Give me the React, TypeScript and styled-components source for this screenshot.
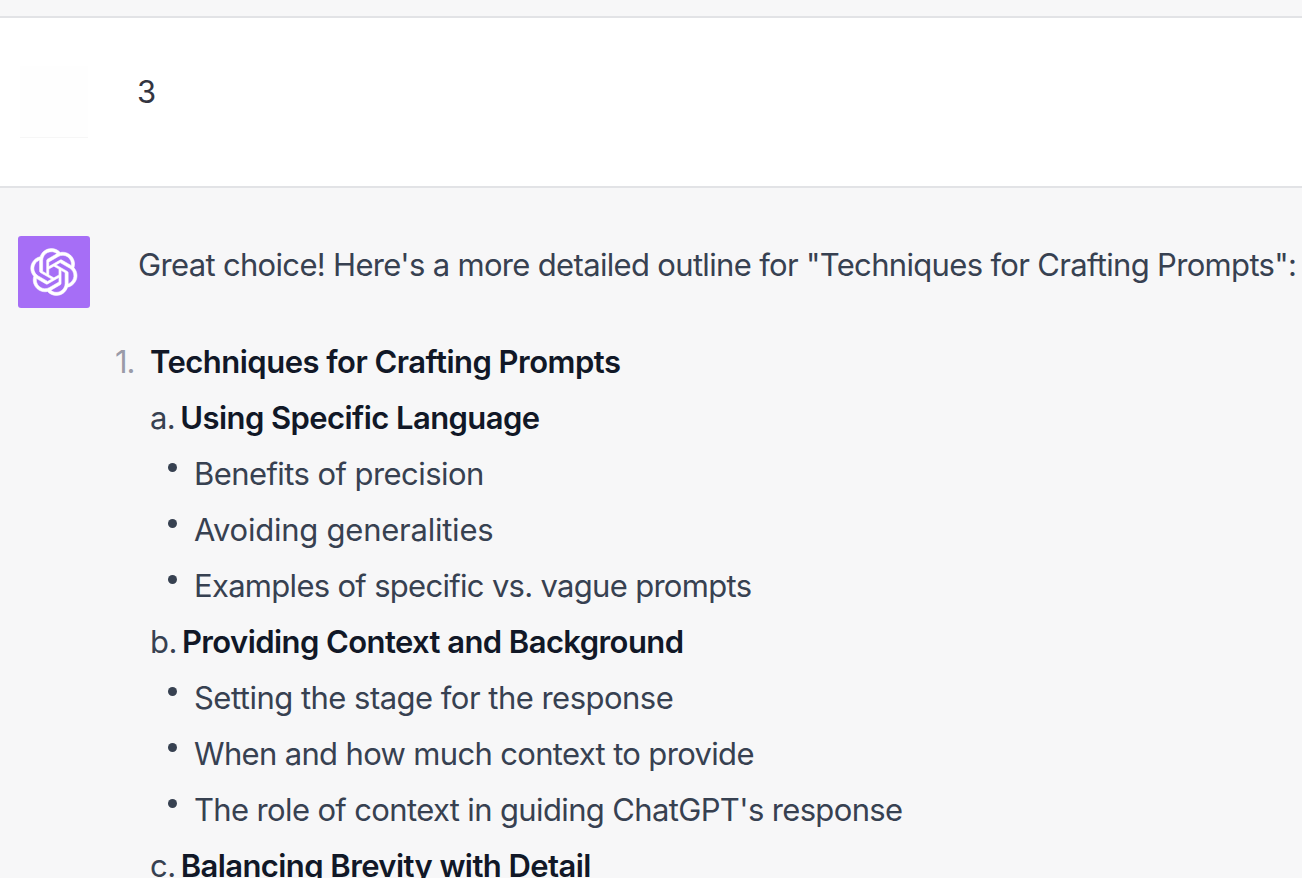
import React from "react";
import styled, { createGlobalStyle } from "styled-components";

const Global = createGlobalStyle`
  html, body { margin: 0; padding: 0; background: #f7f7f8; overflow: hidden; }
  body { height: 878px; font-family: Inter, "Liberation Sans", sans-serif; }
`;

const Page = styled.div`
  width: 1302px;
  height: 878px;
  overflow: hidden;
  display: flex;
  flex-direction: column;
`;

const TopStrip = styled.div`
  flex: none;
  height: 16px;
  background: #f7f7f8;
  border-bottom: 2px solid #e2e3e6;
`;

const UserRow = styled.div`
  flex: none;
  height: 170px;
  box-sizing: border-box;
  background: #fff;
  border-bottom: 2px solid #e2e3e6;
  display: flex;
  padding: 48px 0 0 20px;
`;

const BlankAvatar = styled.div`
  width: 68px;
  height: 72px;
  flex: none;
  background: #fefefe;
  border-bottom: 1px solid #f6f6f6;
  box-sizing: border-box;
`;

const UserText = styled.div`
  margin-left: 49px;
  font-size: 31px;
  line-height: 52px;
  color: #343541;
`;

const BotRow = styled.div`
  flex: 1;
  display: flex;
  padding: 48px 0 0 18px;
  background: #f7f7f8;
`;

const BotAvatar = styled.div`
  width: 72px;
  height: 72px;
  flex: none;
  background: #a66ef6;
  border-radius: 3px;
  display: flex;
  align-items: center;
  justify-content: center;
  color: #fff;
`;

const Body = styled.div`
  margin-left: 48px;
  width: 1164px;
  color: #374151;
  white-space: nowrap;
`;

const Intro = styled.p`
  margin: 0 0 42px;
  padding-top: 2px;
  font-size: 31px;
  line-height: 54px;
  letter-spacing: -0.67px;
`;

const Numbered = styled.div`
  position: relative;
  padding-left: 12px;
`;

const Marker = styled.span`
  position: absolute;
  left: -23px;
  font-size: 31px;
  line-height: 56px;
  letter-spacing: -1px;
  color: #9a9ba8;
`;

const Bold = styled.strong`
  font-weight: 600;
  color: #111827;
`;

const Line = styled.div<{ $track?: number }>`
  font-size: 31px;
  line-height: 56px;
  letter-spacing: ${(p) => p.$track ?? -0.58}px;
`;

const Letter = styled.span`
  margin-right: -3px;
`;

const Bullet = styled(Line)`
  position: relative;
  padding-left: 44px;
  &::before {
    content: "";
    position: absolute;
    left: 18px;
    top: 17px;
    width: 9px;
    height: 9px;
    border-radius: 50%;
    background: #374151;
  }
`;

function Logo() {
  return (
    <svg width="48" height="48" viewBox="0 0 41 41" fill="none">
      <path
        d="M37.5324 16.8707C37.9808 15.5241 38.1363 14.0974 37.9886 12.6859C37.8409 11.2744 37.3934 9.91076 36.676 8.68622C35.6126 6.83404 33.9882 5.3676 32.0373 4.4985C30.0864 3.62941 27.9098 3.40259 25.8215 3.85078C24.8796 2.7893 23.7219 1.94125 22.4257 1.36341C21.1295 0.785575 19.7249 0.491269 18.3058 0.500197C16.1708 0.495044 14.0893 1.16803 12.3614 2.42214C10.6335 3.67624 9.34853 5.44666 8.6917 7.47815C7.30085 7.76286 5.98686 8.3414 4.8377 9.17505C3.68854 10.0087 2.73073 11.0782 2.02839 12.312C0.956464 14.1591 0.498905 16.2988 0.721698 18.4228C0.944492 20.5467 1.83612 22.5449 3.268 24.1293C2.81966 25.4759 2.66413 26.9026 2.81182 28.3141C2.95951 29.7256 3.40701 31.0892 4.12437 32.3138C5.18791 34.1659 6.8123 35.6322 8.76321 36.5013C10.7141 37.3704 12.8907 37.5973 14.9789 37.1492C15.9208 38.2107 17.0786 39.0587 18.3747 39.6366C19.6709 40.2144 21.0755 40.5087 22.4946 40.4998C24.6307 40.5054 26.7133 39.8321 28.4418 38.5772C30.1704 37.3223 31.4556 35.5506 32.1119 33.5179C33.5027 33.2332 34.8167 32.6547 35.9659 31.821C37.115 30.9874 38.0728 29.9178 38.7752 28.684C39.8458 26.8371 40.3023 24.6979 40.0789 22.5748C39.8556 20.4517 38.9639 18.4544 37.5324 16.8707ZM22.4978 37.8849C20.7443 37.8874 19.0459 37.2733 17.6994 36.1501C17.7601 36.117 17.8666 36.0586 17.936 36.0161L25.9004 31.4156C26.1003 31.3019 26.2663 31.137 26.3813 30.9378C26.4964 30.7386 26.5563 30.5124 26.5549 30.2825V19.0542L29.9213 20.998C29.9389 21.0068 29.9541 21.0198 29.9656 21.0359C29.977 21.052 29.9842 21.0707 29.9867 21.0902V30.3889C29.9842 32.375 29.1946 34.2791 27.7909 35.6841C26.3872 37.0892 24.4838 37.8806 22.4978 37.8849ZM6.39227 31.0064C5.51397 29.4888 5.19742 27.7107 5.49804 25.9832C5.55718 26.0187 5.66048 26.0818 5.73461 26.1244L13.699 30.7248C13.8975 30.8408 14.1233 30.902 14.3532 30.902C14.583 30.902 14.8088 30.8408 15.0073 30.7248L24.731 25.1103V28.9979C24.7321 29.0177 24.7283 29.0376 24.7199 29.0556C24.7115 29.0736 24.6988 29.0893 24.6829 29.1012L16.6317 33.7497C14.9096 34.7416 12.8643 35.0097 10.9447 34.4954C9.02506 33.9811 7.38785 32.7263 6.39227 31.0064ZM4.29707 13.6194C5.17156 12.0998 6.55279 10.9364 8.19885 10.3327C8.19885 10.4013 8.19491 10.5228 8.19491 10.6071V19.808C8.19351 20.0378 8.25334 20.2638 8.36823 20.4629C8.48312 20.6619 8.64893 20.8267 8.84863 20.9404L18.5723 26.5542L15.206 28.4979C15.1894 28.5089 15.1703 28.5155 15.1505 28.5173C15.1307 28.5191 15.1107 28.516 15.0924 28.5082L7.04046 23.8557C5.32135 22.8601 4.06716 21.2235 3.55289 19.3046C3.03862 17.3858 3.30624 15.3413 4.29707 13.6194ZM31.955 20.0556L22.2312 14.4411L25.5976 12.4981C25.6142 12.4872 25.6333 12.4805 25.6531 12.4787C25.6729 12.4769 25.6928 12.4801 25.7111 12.4879L33.7631 17.1364C34.9967 17.849 36.0017 18.8982 36.6606 20.1613C37.3194 21.4244 37.6047 22.849 37.4832 24.2684C37.3617 25.6878 36.8382 27.0432 35.9743 28.1759C35.1103 29.3086 33.9415 30.1717 32.6047 30.6641C32.6047 30.5947 32.6047 30.4733 32.6047 30.3889V21.188C32.6066 20.9586 32.5474 20.7328 32.4332 20.5338C32.319 20.3348 32.154 20.1698 31.955 20.0556ZM35.3055 15.0128C35.2464 14.9765 35.1431 14.9142 35.069 14.8717L27.1045 10.2712C26.906 10.1554 26.6803 10.0943 26.4504 10.0943C26.2206 10.0943 25.9948 10.1554 25.7963 10.2712L16.0726 15.8858V11.9982C16.0715 11.9783 16.0753 11.9585 16.0837 11.9405C16.0921 11.9225 16.1048 11.9068 16.1207 11.8949L24.1719 7.25025C25.4053 6.53903 26.8158 6.19376 28.2383 6.25482C29.6608 6.31589 31.0364 6.78077 32.2044 7.59508C33.3723 8.40939 34.2842 9.53945 34.8334 10.8531C35.3826 12.1667 35.5464 13.6095 35.3055 15.0128ZM14.2424 21.9419L10.8752 19.9981C10.8576 19.9893 10.8423 19.9763 10.8309 19.9602C10.8195 19.9441 10.8122 19.9254 10.8098 19.9058V10.6071C10.8107 9.18295 11.2173 7.78848 11.9819 6.58696C12.7466 5.38544 13.8377 4.42659 15.1275 3.82264C16.4173 3.21869 17.8524 2.99464 19.2649 3.1767C20.6775 3.35876 22.0089 3.93941 23.1034 4.85067C23.0427 4.88379 22.937 4.94215 22.8668 4.98473L14.9024 9.58517C14.7025 9.69878 14.5366 9.86356 14.4215 10.0626C14.3065 10.2616 14.2466 10.4877 14.2479 10.7175L14.2424 21.9419ZM16.071 17.9991L20.4018 15.4978L24.7325 17.9975V22.9985L20.4018 25.4983L16.071 22.9985V17.9991Z"
        fill="currentColor"
        stroke="currentColor"
        strokeWidth="0.5"
      />
    </svg>
  );
}

export default function App() {
  return (
    <Page>
      <Global />
      <TopStrip />
      <UserRow>
        <BlankAvatar />
        <UserText>3</UserText>
      </UserRow>
      <BotRow>
        <BotAvatar>
          <Logo />
        </BotAvatar>
        <Body>
          <Intro>Great choice! Here's a more detailed outline for "Techniques for Crafting Prompts":</Intro>
          <Numbered>
            <Marker>1.</Marker>
            <Line $track={-0.52}><Bold>Techniques for Crafting Prompts</Bold></Line>
            <Line><Letter>a. </Letter><Bold>Using Specific Language</Bold></Line>
            <Bullet $track={-0.57}>Benefits of precision</Bullet>
            <Bullet $track={-0.24}>Avoiding generalities</Bullet>
            <Bullet $track={-0.7}>Examples of specific vs. vague prompts</Bullet>
            <Line><Letter>b. </Letter><Bold>Providing Context and Background</Bold></Line>
            <Bullet $track={-0.52}>Setting the stage for the response</Bullet>
            <Bullet $track={-0.66}>When and how much context to provide</Bullet>
            <Bullet $track={-0.64}>The role of context in guiding ChatGPT's response</Bullet>
            <Line><Letter>c. </Letter><Bold>Balancing Brevity with Detail</Bold></Line>
          </Numbered>
        </Body>
      </BotRow>
    </Page>
  );
}
